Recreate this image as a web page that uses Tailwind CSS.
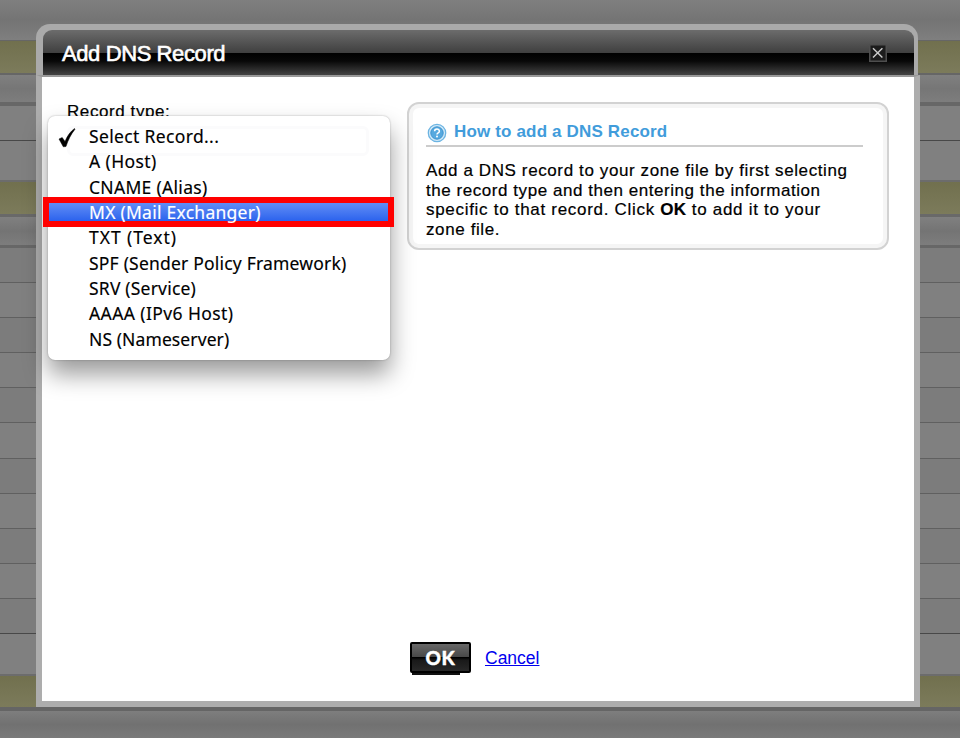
<!DOCTYPE html>
<html lang="en">
<head>
<meta charset="utf-8">
<title>Add DNS Record</title>
<script src="https://cdn.jsdelivr.net/npm/@tailwindcss/browser@4"></script>
</head>
<body class="relative h-[738px] w-[960px] overflow-hidden bg-[#808080] font-['Liberation_Sans',Arial,sans-serif] text-black">
<!-- Dimmed page rows -->
<div class="flex h-[738px] flex-col" aria-hidden="true">
  <div class="h-[40px] bg-linear-to-b from-[#7f7f7f] via-[#747474] to-[#7f7f7f]"></div>
  <div class="h-[35px] border-b-2 border-t border-[#666] bg-linear-to-b from-[#71704e] to-[#7c7b5b]"></div>
  <div class="h-[27px] bg-linear-to-b from-[#808080] via-[#767676] to-[#7d7d7d]"></div>
  <div class="h-[38px] border-t-4 border-[#676767]"></div>
  <div class="h-[40px] border-t border-[#484848]"></div>
  <div class="h-[34px] border-t-2 border-[#6c6c6c] bg-linear-to-b from-[#71704e] to-[#7c7b5b]"></div>
  <div class="h-[31px] border-t-3 border-[#696969] bg-linear-to-b from-[#808080] via-[#747474] to-[#7d7d7d]"></div>
  <div class="h-[37px] border-t-3 border-[#676767] bg-[#7c7c7c]"></div>
  <div class="h-[35px] border-t border-[#606060]"></div>
  <div class="h-[35px] border-t border-[#606060] bg-[#7c7c7c]"></div>
  <div class="h-[35px] border-t border-[#606060]"></div>
  <div class="h-[35px] border-t border-[#606060] bg-[#7c7c7c]"></div>
  <div class="h-[36px] border-t border-[#606060]"></div>
  <div class="h-[35px] border-t border-[#606060] bg-[#7c7c7c]"></div>
  <div class="h-[35px] border-t border-[#606060]"></div>
  <div class="h-[35px] border-t border-[#606060] bg-[#7c7c7c]"></div>
  <div class="h-[35px] border-t border-[#606060]"></div>
  <div class="h-[35px] border-t border-[#606060] bg-[#7c7c7c]"></div>
  <div class="h-[41px] border-t border-[#484848]"></div>
  <div class="h-[33px] border-t-2 border-[#6c6c6c] bg-linear-to-b from-[#71704e] to-[#7c7b5b]"></div>
  <div class="h-[31px] border-t-4 border-[#656565] bg-linear-to-b from-[#7e7e7e] via-[#717171] to-[#7a7a7a]"></div>
</div>

<!-- Dialog -->
<section class="absolute left-[36px] top-[24px] flex h-[683px] w-[884px] flex-col" role="dialog">
  <header class="mr-[2px] h-[51px] shrink-0 rounded-t-[14px] bg-[#aaa] pl-[7px] pr-[4px] pt-[6px]">
    <div class="flex h-[45px] items-start justify-between rounded-t-[9px] bg-[linear-gradient(to_bottom,#6c6c6c_0px,#3f3f3f_23px,#000_23px,#080808_31px,#444_45px)] pl-[19px] pr-[27px]">
      <h1 class="pt-[11px] text-[22px] leading-[25px] tracking-[-0.4px] text-white [-webkit-text-stroke:0.6px_white]">Add DNS Record</h1>
      <svg class="mt-[14px]" width="18" height="18" viewBox="0 0 18 18"><rect x=".75" y=".75" width="16.5" height="16.5" fill="#1c1c1c" stroke="#4e4e4e" stroke-width="1.5"/><path d="M4 4.2 13.4 13.6M13.4 4.2 4 13.6" stroke="#ccc" stroke-width="1.4"/></svg>
    </div>
  </header>
  <div class="flex grow flex-col border-x-6 border-b-6 border-t-2 border-[#adadad] border-t-[#999] bg-white">
    <div class="flex grow items-start pt-[25px]">
      <div class="w-[365px] pl-[25px] text-[17px] leading-[19px] tracking-[0.58px] [-webkit-text-stroke:0.2px_black]">Record type:</div>
      <aside class="h-[148px] w-[482px] rounded-[12px] border-2 border-[#d2d2d2] bg-white pl-[17px] pr-[22px] pt-[17px] shadow-[inset_0_0_0_4px_#f5f5f5]">
        <h2 class="flex h-[26px] w-[437px] items-start border-b-2 border-[#ccc] text-[17px] font-bold leading-[21px] tracking-[0.16px] text-[#419cdb]">
          <svg class="ml-[1px] mr-[7px] mt-[2px] shrink-0" width="20" height="20" viewBox="0 0 20 20"><circle cx="10" cy="10" r="8.7" fill="#d3eaf8" stroke="#6cb4e2" stroke-width="1.3"/><circle cx="10" cy="10" r="6.2" fill="#56a9df" stroke="#3d93d0"/><path d="M7.6 8.2C7.6 5.2 12.4 5.2 12.4 8.2 12.4 10 10 9.8 10 11.6" fill="none" stroke="#fff" stroke-width="1.5"/><circle cx="10" cy="13.6" r="1" fill="#fff"/></svg>
          <span class="whitespace-nowrap">How to add a DNS Record</span>
        </h2>
        <p class="mt-[14px] whitespace-nowrap text-[17px] leading-[19.6px] tracking-[0.61px] [-webkit-text-stroke:0.2px_black]">Add a DNS record to your zone file by first selecting<br><span class="tracking-[0.55px]">the record type and then entering the information</span><br><span class="tracking-[0.7px]">specific to that record. Click <b class="tracking-[0.3px]">OK</b> to add it to your</span><br>zone file.</p>
      </aside>
    </div>
    <footer class="flex h-[59px] items-start pl-[368px]">
      <div class="relative mr-[14px]">
        <span class="absolute bottom-[-2px] left-[2px] h-[3px] w-[48px] bg-[#111]"></span>
        <button class="relative block h-[31px] w-[61px] rounded-[2px] border-2 border-black bg-[linear-gradient(to_bottom,#686868_0%,#484848_48%,#000_50%,#191919_60%,#282828_100%)] text-center font-[Lato,sans-serif] text-[19px] font-black leading-[26px] tracking-[0.6px] text-white [-webkit-text-stroke:0.4px_white]">OK</button>
      </div>
      <a href="#" class="mt-[6px] text-[17.5px] leading-[20px] text-[#0000ee] underline">Cancel</a>
    </footer>
  </div>
</section>

<!-- Open record type menu -->
<div class="absolute left-[48px] top-[116px] h-[244px] w-[342px] rounded-[7px] bg-white pt-[8px] font-['Noto_Sans',sans-serif] text-[17.5px] leading-[25.35px] tracking-[0.2px] shadow-[0_14px_24px_rgba(0,0,0,0.4),0_0_2px_rgba(0,0,0,0.3)]">
  <div class="absolute left-[19px] top-[10px] h-[30px] w-[302px] rounded-[6px] border-3 border-[#fbfbfc]"></div>
  <ul class="relative whitespace-nowrap [-webkit-text-stroke:0.15px_currentColor]">
    <li class="flex h-[25.35px] pl-[10px] tracking-[0.35px]"><svg class="mr-[12px] mt-[4px] shrink-0" width="19" height="20" viewBox="0 0 19 20"><path d="M1 11 4.2 9.5 7 13.4C9.5 7.5 12.5 3.5 16.5 .5L17 1.2C12.8 6.4 10.1 12 8 18.5L5.3 18.8Z" stroke="#000" stroke-width=".5"/></svg><span>Select Record...</span></li>
    <li class="h-[25.35px] pl-[41px] tracking-[0.4px]">A (Host)</li>
    <li class="h-[25.35px] pl-[41px] tracking-[0.3px]">CNAME (Alias)</li>
    <li class="-mx-[5px] -mb-[1.6px] -mt-[3.05px] h-[30px] w-[351px] border-6 border-[#f00] bg-linear-to-b from-[#628df5] to-[#2b62ed] bg-origin-padding pl-[40px] leading-[19px] tracking-[0.26px] text-white">MX (Mail Exchanger)</li>
    <li class="h-[25.35px] pl-[41px] tracking-[0.95px]">TXT (Text)</li>
    <li class="h-[25.35px] pl-[41px]">SPF (Sender Policy Framework)</li>
    <li class="h-[25.35px] pl-[41px]">SRV (Service)</li>
    <li class="h-[25.35px] pl-[41px] tracking-[0.4px]">AAAA (IPv6 Host)</li>
    <li class="h-[25.35px] pl-[41px] tracking-[0.1px]">NS (Nameserver)</li>
  </ul>
</div>
</body>
</html>
